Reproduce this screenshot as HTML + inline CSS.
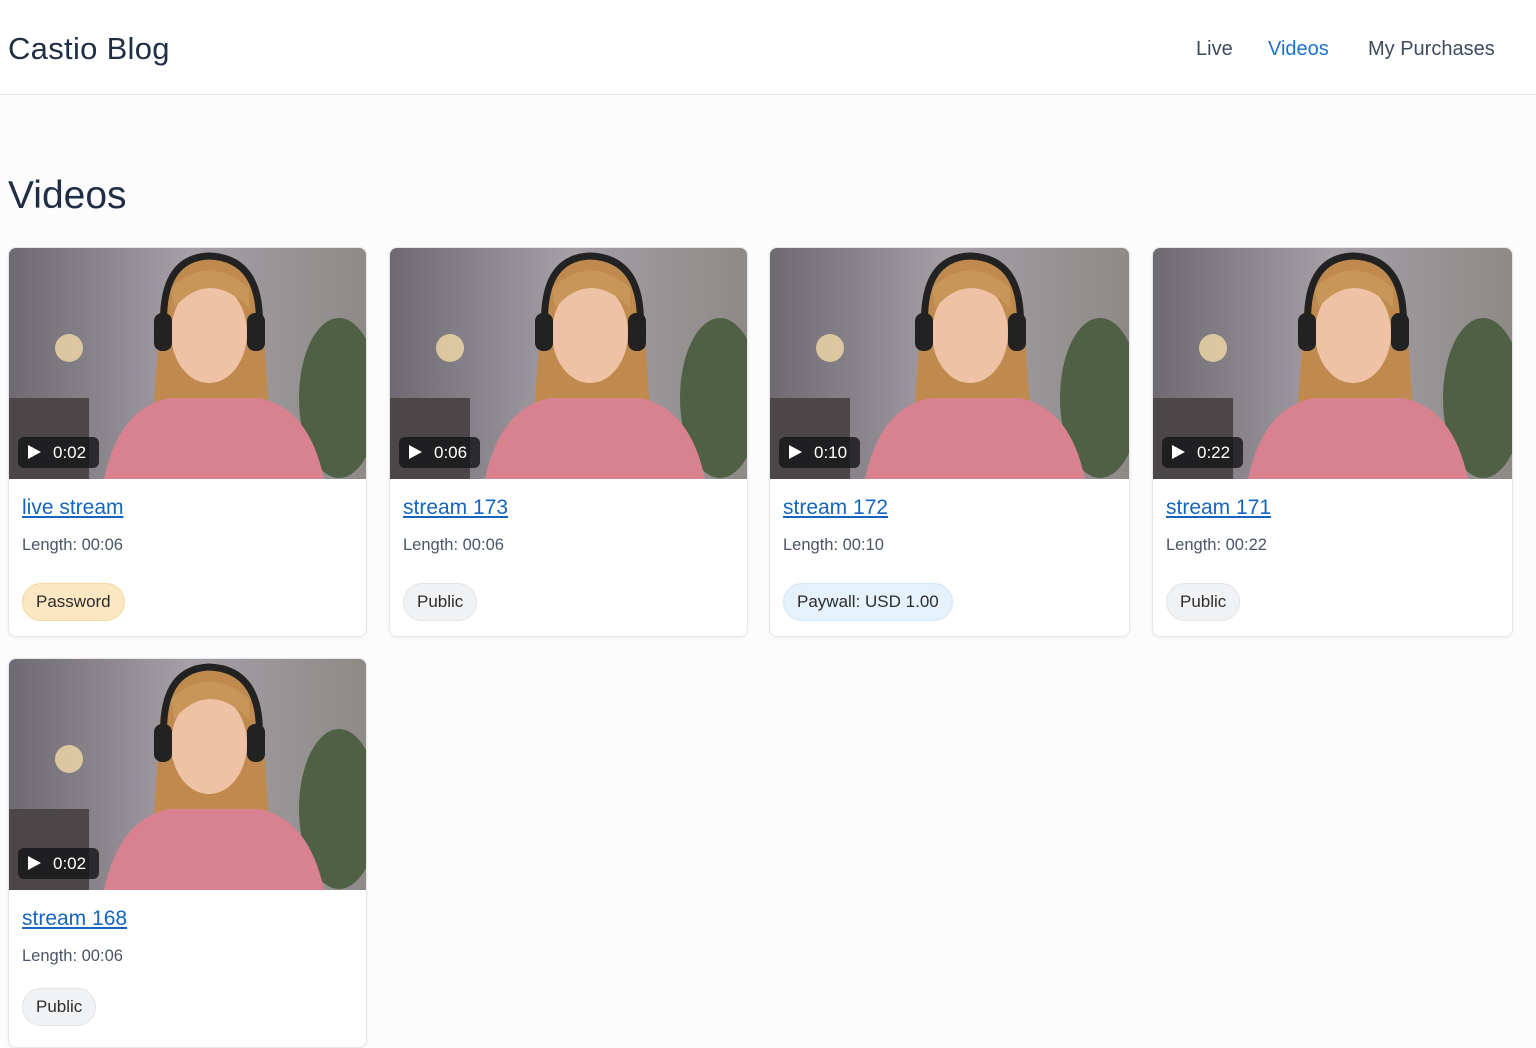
<!DOCTYPE html>
<html><head><meta charset="utf-8"><style>
*{box-sizing:border-box;margin:0;padding:0}
body{width:1536px;height:1024px;overflow:hidden;background:#fcfcfd;font-family:"Liberation Sans",sans-serif;color:#1f2d45;position:relative}
.hdr{position:absolute;left:0;top:0;width:1536px;height:95px;border-bottom:1px solid #e3e5e8;background:#fff}
.logo{position:absolute;left:8px;top:31px;font-size:31px;color:#1f2d45;letter-spacing:.3px}
.nav{position:absolute;top:38px;font-size:20px;color:#3d4a60}
h1{position:absolute;left:8px;top:174px;font-size:39px;font-weight:normal;color:#1f2d45}
.card{position:absolute;width:359px;height:390px;background:#fff;border:1px solid #e5e7ea;border-radius:8px;overflow:hidden;box-shadow:0 1px 3px rgba(0,0,0,.06)}
.img{position:absolute;left:0;top:0;width:100%;height:231px}
.dur{position:absolute;left:9px;top:189px;height:31px;padding:0 13px 0 10px;background:rgba(20,20,22,.8);border-radius:6px;color:#fff;font-size:17px;line-height:31px}
.dur b{display:inline-block;width:0;height:0;border-left:13px solid #fff;border-top:7px solid transparent;border-bottom:7px solid transparent;margin-right:12px;vertical-align:-1px}
.t{position:absolute;left:13px;top:248px;font-size:21px;color:#1565c0;text-decoration:underline}
.l{position:absolute;left:13px;top:288px;font-size:16.5px;color:#4a5568}
.bd{position:absolute;left:13px;top:335px;height:38px;padding:0 13px;border-radius:19px;font-size:17px;line-height:36px;color:#2d2d2d;border:1px solid #e2e3e6;background:#f1f2f4}
.r2 .bd{top:329px}
</style></head><body>
<div class="hdr"><div class="logo">Castio Blog</div>
<div class="nav" style="left:1196px">Live</div>
<div class="nav" style="left:1268px;color:#1e6fd0">Videos</div>
<div class="nav" style="left:1368px">My Purchases</div></div>
<h1>Videos</h1>

<svg width="0" height="0" style="position:absolute"><defs>
<linearGradient id="bg" x1="0" x2="1"><stop offset="0" stop-color="#6e6a72"/><stop offset=".5" stop-color="#a59fa7"/><stop offset="1" stop-color="#8d8a86"/></linearGradient>
<g id="pic">
<rect width="359" height="231" fill="url(#bg)"/>
<rect x="0" y="150" width="80" height="81" fill="#4d4648"/>
<circle cx="60" cy="100" r="14" fill="#f2d9a8" opacity=".8"/>
<ellipse cx="330" cy="150" rx="40" ry="80" fill="#4f6044"/>
<path d="M150 80 Q150 10 200 10 Q255 10 255 90 L265 231 L140 231 Z" fill="#c08a4e"/>
<path d="M95 231 Q110 160 160 150 L250 150 Q300 160 315 231 Z" fill="#d9828f"/>
<ellipse cx="200" cy="85" rx="38" ry="50" fill="#efc2a6"/>
<path d="M165 60 Q200 20 240 60 L240 40 Q200 5 162 40 Z" fill="#c79658"/>
<path d="M155 85 Q150 10 200 8 Q255 10 250 85" fill="none" stroke="#222" stroke-width="7"/>
<rect x="145" y="65" width="18" height="38" rx="8" fill="#222"/><rect x="238" y="65" width="18" height="38" rx="8" fill="#222"/>
</g></defs></svg>

<div class="card" style="left:8px;top:247px"><svg class="img"><use href="#pic"/></svg><div class="dur"><b></b>0:02</div><div class="t">live stream</div><div class="l">Length: 00:06</div><div class="bd" style="background:#fbe7c2;border-color:#f3d9a0">Password</div></div>
<div class="card" style="left:389px;top:247px"><svg class="img"><use href="#pic"/></svg><div class="dur"><b></b>0:06</div><div class="t">stream 173</div><div class="l">Length: 00:06</div><div class="bd">Public</div></div>
<div class="card" style="left:769px;top:247px;width:361px"><svg class="img"><use href="#pic"/></svg><div class="dur"><b></b>0:10</div><div class="t">stream 172</div><div class="l">Length: 00:10</div><div class="bd" style="background:#e5f1fb;border-color:#d3e6f6">Paywall: USD 1.00</div></div>
<div class="card" style="left:1152px;top:247px;width:361px"><svg class="img"><use href="#pic"/></svg><div class="dur"><b></b>0:22</div><div class="t">stream 171</div><div class="l">Length: 00:22</div><div class="bd">Public</div></div>
<div class="card r2" style="left:8px;top:658px"><svg class="img"><use href="#pic"/></svg><div class="dur"><b></b>0:02</div><div class="t">stream 168</div><div class="l">Length: 00:06</div><div class="bd">Public</div></div>
</body></html>
